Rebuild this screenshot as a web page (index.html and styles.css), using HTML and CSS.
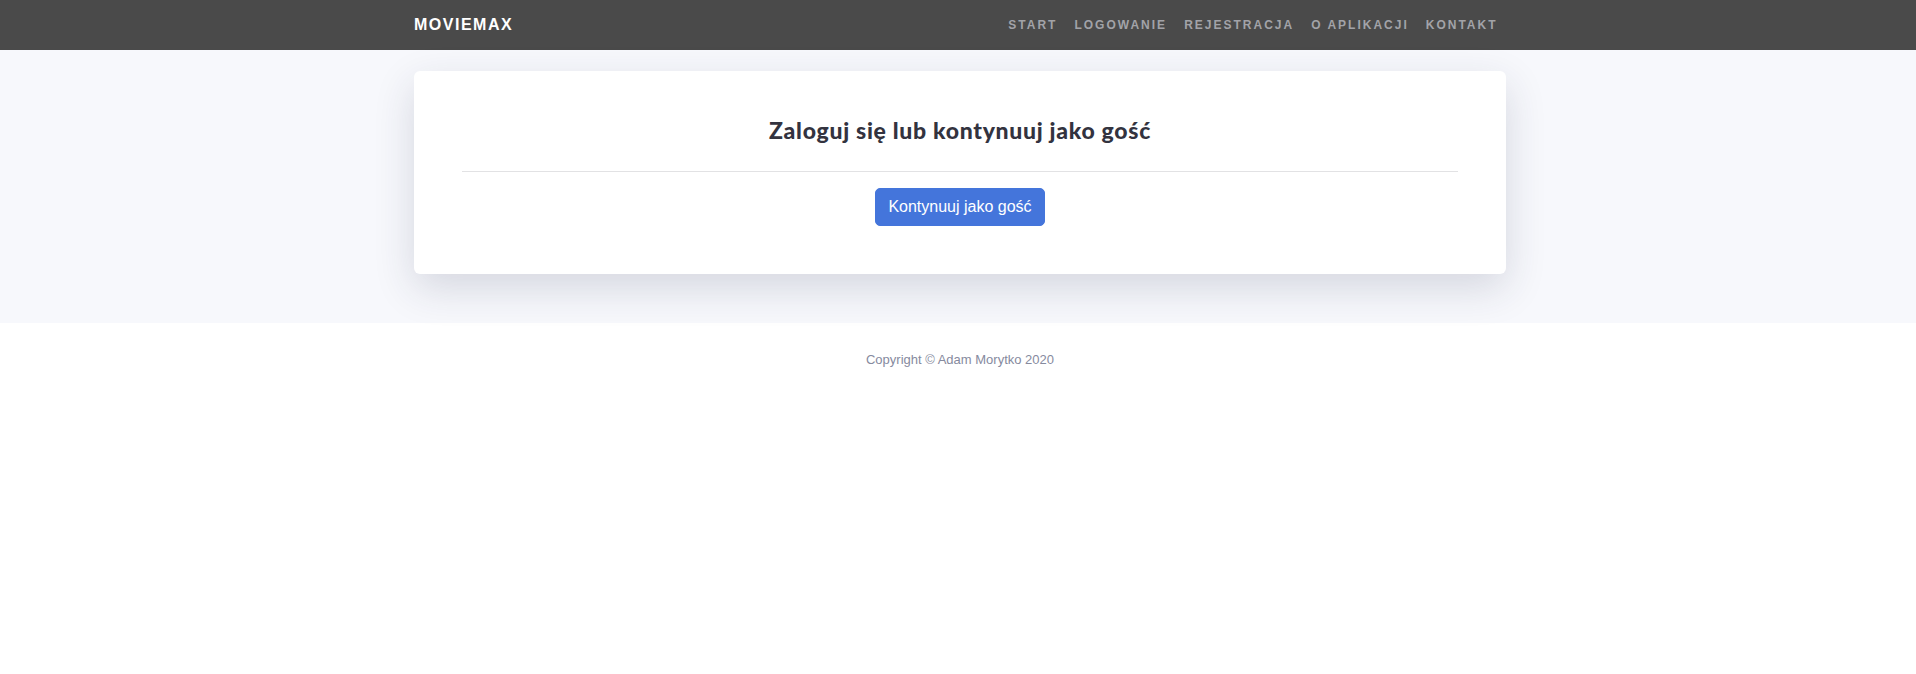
FILE: index.html
```html
<!DOCTYPE html>
<html lang="pl">
<head>
<meta charset="utf-8">
<title>MovieMax</title>
<link rel="stylesheet" href="styles.css">
</head>
<body>
<nav class="navbar">
  <div class="container nav-inner">
    <a class="brand" href="#">MOVIEMAX</a>
    <ul class="nav-links">
      <li><a href="#">Start</a></li>
      <li><a href="#">Logowanie</a></li>
      <li><a href="#">Rejestracja</a></li>
      <li><a href="#">O aplikacji</a></li>
      <li><a href="#">Kontakt</a></li>
    </ul>
  </div>
</nav>
<main class="hero">
  <div class="container">
    <section class="card">
      <h1 class="card-title">Zaloguj się lub kontynuuj jako gość</h1>
      <hr class="divider">
      <div class="actions">
        <button class="btn-primary" type="button">Kontynuuj jako gość</button>
      </div>
    </section>
  </div>
</main>
<footer class="footer">
  <p>Copyright © Adam Morytko 2020</p>
</footer>
</body>
</html>
```

FILE: styles.css
```css
* { box-sizing: border-box; }

html, body {
  margin: 0;
  padding: 0;
  background: #ffffff;
  font-family: "Liberation Sans", Arial, sans-serif;
}

body {
  padding-left: 4px;
}

.container {
  width: 1092px;
  margin: 0 auto;
}

.navbar {
  background: #4a4a4a;
  height: 50px;
  margin-left: -4px;
  padding-left: 4px;
}

.nav-inner {
  height: 50px;
  display: flex;
  align-items: center;
  justify-content: space-between;
}

.brand {
  color: #ffffff;
  text-decoration: none;
  font-weight: 700;
  font-size: 16px;
  letter-spacing: 1.5px;
}

.nav-links {
  list-style: none;
  margin: 0;
  padding: 0;
  display: flex;
}

.nav-links a {
  display: block;
  padding: 0 8.5px;
  color: #a2a3a8;
  text-decoration: none;
  font-weight: 700;
  font-size: 12px;
  letter-spacing: 2px;
  text-transform: uppercase;
}

.hero {
  background: #f7f8fc;
  padding: 21px 0 49px;
  margin-left: -4px;
  padding-left: 4px;
}

.card {
  background: #ffffff;
  border-radius: 6px;
  padding: 46px 48px 48px;
  box-shadow: 0 14px 40px rgba(40, 45, 75, 0.16);
  text-align: center;
}

.card-title {
  margin: 0 0 28px;
  font-family: Lato, "Noto Sans", sans-serif;
  font-weight: 900;
  font-size: 23px;
  line-height: 26px;
  letter-spacing: 0.7px;
  color: #33333f;
}

.divider {
  margin: 0;
  border: 0;
  border-top: 1px solid #e2e2e4;
}

.actions {
  padding-top: 16px;
}

.btn-primary {
  font-family: "Liberation Sans", Arial, sans-serif;
  font-size: 16px;
  line-height: 24px;
  padding: 6px 12px;
  color: #ffffff;
  background: #4475db;
  border: 1px solid #4475db;
  border-radius: 5px;
  cursor: pointer;
}

.footer {
  text-align: center;
  padding: 29px 0;
}

.footer p {
  margin: 0;
  font-size: 13px;
  color: #868a9e;
}
```
